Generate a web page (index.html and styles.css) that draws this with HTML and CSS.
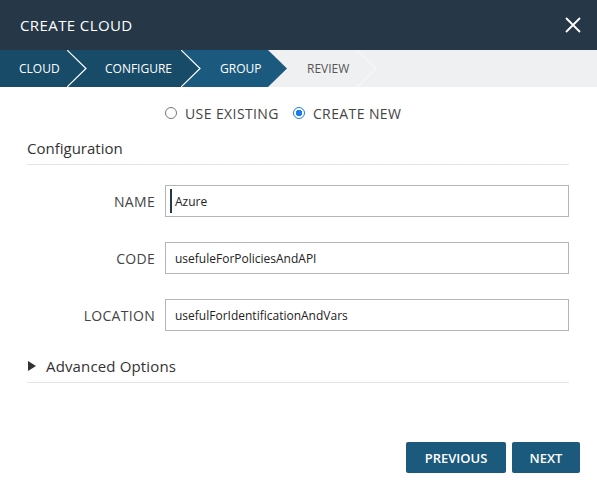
FILE: index.html
```html
<!DOCTYPE html>
<html lang="en">
<head>
    <meta charset="UTF-8">
    <meta name="viewport" content="width=device-width, initial-scale=1.0">
    <title>Create Cloud</title>
    <link rel="stylesheet" href="styles.css">
</head>
<body>
  <div class="modal">
    <div class="modal-header">
      <div class="modal-title">CREATE CLOUD</div>
      <svg class="close" width="16" height="16" viewBox="0 0 16 16">
        <path d="M1 1 L15 15 M15 1 L1 15" stroke="#fff" stroke-width="1.8" fill="none"/>
      </svg>
    </div>

    <div class="steps">
      <div class="step step-done step-first">CLOUD</div>
      <svg class="sep" width="20" height="37" viewBox="0 0 20 37">
        <rect width="20" height="37" fill="#174b68"/>
        <polyline points="0,0 19,18.5 0,37" stroke="#fff" stroke-width="1.2" fill="none"/>
      </svg>
      <div class="step step-done">CONFIGURE</div>
      <svg class="sep" width="20" height="37" viewBox="0 0 20 37">
        <rect width="20" height="37" fill="#1b5a7e"/>
        <polygon points="0,0 19,18.5 0,37" fill="#174b68"/>
        <polyline points="0,0 19,18.5 0,37" stroke="#fff" stroke-width="1.2" fill="none"/>
      </svg>
      <div class="step step-current">GROUP</div>
      <svg class="sep" width="20" height="37" viewBox="0 0 20 37">
        <rect width="20" height="37" fill="#eff0f1"/>
        <polygon points="0,0 19,18.5 0,37" fill="#1b5a7e"/>
      </svg>
      <div class="step step-todo">REVIEW</div>
      <svg class="sep" width="20" height="37" viewBox="0 0 20 37">
        <rect width="20" height="37" fill="#eff0f1"/>
        <polyline points="0,0 19,18.5 0,37" stroke="#fbfbfb" stroke-width="1" fill="none"/>
      </svg>
      <div class="step-rest"></div>
    </div>

    <div class="modal-body">
      <div class="choice">
        <label class="radio"><span class="dot"></span>USE EXISTING</label>
        <label class="radio"><span class="dot dot-on"></span>CREATE NEW</label>
      </div>

      <div class="section-title">Configuration</div>

      <div class="field">
        <div class="field-label">NAME</div>
        <div class="input input-focus"><span class="caret"></span>Azure</div>
      </div>
      <div class="field">
        <div class="field-label">CODE</div>
        <div class="input">usefuleForPoliciesAndAPI</div>
      </div>
      <div class="field">
        <div class="field-label">LOCATION</div>
        <div class="input">usefulForIdentificationAndVars</div>
      </div>

      <div class="advanced">
        <svg width="8" height="10" viewBox="0 0 8 10"><polygon points="0,0 8,5 0,10" fill="#333"/></svg>
        <span>Advanced Options</span>
      </div>
    </div>

    <div class="modal-footer">
      <button class="btn btn-prev">PREVIOUS</button>
      <button class="btn btn-next">NEXT</button>
    </div>
  </div>
</body>
</html>
```

FILE: styles.css
```css
body {
  margin: 0;
  background: #fff;
  font-family: "Open Sans", "Liberation Sans", sans-serif;
  color: #333;
}

.modal {
  width: 597px;
  height: 485px;
  display: flex;
  flex-direction: column;
}

.modal-header {
  height: 50px;
  background: #263747;
  display: flex;
  align-items: center;
  justify-content: space-between;
  padding: 0 16px 0 20px;
}

.modal-title {
  color: #fff;
  font-size: 15px;
  letter-spacing: 0.4px;
}

/* wizard steps */
.steps {
  height: 37px;
  display: flex;
  background: #eff0f1;
}

.sep {
  display: block;
  flex: none;
}

.step {
  display: flex;
  align-items: center;
  font-size: 12px;
  color: #fff;
  padding-left: 19px;
}

.step-done {
  background: #174b68;
}

.step-first {
  width: 48px;
}

.step-done:not(.step-first) {
  width: 76px;
  padding-left: 18px;
}

.step-current {
  background: #1b5a7e;
  width: 48px;
}

.step-todo {
  background: #eff0f1;
  color: #555;
  width: 50px;
}

.step-rest {
  flex: 1;
}

.modal-body {
  padding: 0 28px 0 27px;
  flex: 1;
}

.choice {
  display: flex;
  margin: 16px 0 0 138px;
  height: 20px;
  align-items: center;
  gap: 14px;
}

.radio {
  display: flex;
  align-items: center;
  font-size: 14px;
  letter-spacing: 0.4px;
  color: #444;
  gap: 8px;
}

.dot {
  width: 12px;
  height: 12px;
  border: 1px solid #777;
  border-radius: 50%;
  box-sizing: border-box;
}

.dot-on {
  border: 1px solid #1a7cf2;
  background: radial-gradient(circle, #1a7cf2 0 3px, #fff 3.5px);
}

.section-title {
  margin-top: 15px;
  font-size: 15px;
  padding-bottom: 6px;
  border-bottom: 1px solid #e3e4e5;
  color: #333;
}

.field {
  display: flex;
  align-items: center;
  margin-top: 20px;
}

.field + .field {
  margin-top: 25px;
}

.field-label {
  width: 128px;
  text-align: right;
  font-size: 14px;
  letter-spacing: 0.3px;
  color: #444;
  margin-right: 10px;
}

.input {
  flex: 1;
  height: 32px;
  box-sizing: border-box;
  border: 1px solid #b5b5b5;
  display: flex;
  align-items: center;
  padding-left: 9px;
  font-size: 12px;
  color: #222;
}

.input-focus {
  padding-left: 4px;
}

.caret {
  width: 2px;
  height: 24px;
  background: #263747;
  margin-right: 3px;
}

.advanced {
  display: flex;
  align-items: center;
  gap: 10px;
  margin-top: 25px;
  padding: 0 0 6px 1px;
  border-bottom: 1px solid #e3e4e5;
  font-size: 15px;
  letter-spacing: 0.15px;
  color: #333;
}

.modal-footer {
  display: flex;
  justify-content: flex-end;
  gap: 6px;
  padding: 0 17px 12px 0;
}

.btn {
  height: 31px;
  border: none;
  border-radius: 2px;
  background: #1b5a7c;
  color: #fff;
  font-family: "Open Sans", "Liberation Sans", sans-serif;
  font-size: 13px;
  font-weight: 600;
  padding: 0;
}

.btn-prev {
  width: 100px;
}

.btn-next {
  width: 68px;
}
```
